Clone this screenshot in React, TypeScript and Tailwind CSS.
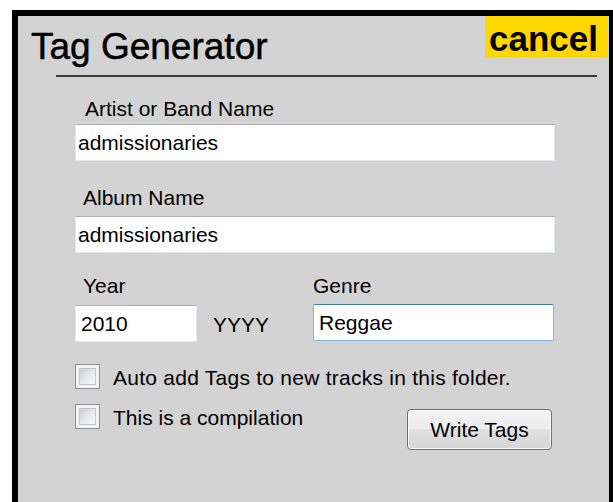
import type { ReactNode } from "react";

function TextField({
  value,
  width = "w-full",
  focused = false,
  inset = "pl-[2px]",
}: {
  value: string;
  width?: string;
  focused?: boolean;
  inset?: string;
}) {
  const edge = focused
    ? "border-[#7eb4ea] border-t-[#3d7bad] rounded-[2px]"
    : "border-[#e3e6ec] border-t-[#abadb3]";
  return (
    <div
      className={`${width} h-[37px] bg-white border flex items-center ${edge} ${inset}`}
    >
      <span className="text-[21px] leading-[24px]">{value}</span>
    </div>
  );
}

function Label({ children, inset }: { children: ReactNode; inset: string }) {
  return (
    <div className={`text-[21px] leading-[24px] ${inset}`}>{children}</div>
  );
}

function CheckBox({ label, tracking = "" }: { label: string; tracking?: string }) {
  return (
    <div className="flex items-start">
      <div className="w-[25px] h-[25px] border border-[#8f8f8f] bg-[#f4f4f4] p-[3px]">
        <div className="w-full h-full border border-[#c2c5ca] bg-[linear-gradient(135deg,#ced1d6_0%,#e9eaec_55%,#f7f7f7_100%)]" />
      </div>
      <span className={`ml-[13px] mt-[2px] text-[21px] leading-[24px] ${tracking}`}>
        {label}
      </span>
    </div>
  );
}

export default function App() {
  return (
    <div className="w-[613px] h-[502px] bg-white pt-[10px] pl-[12px] flex flex-col font-['Liberation_Sans',Arial,sans-serif]">
      <div className="flex-1 border-t-[6px] border-l-[6px] border-r-[4px] border-black bg-[#d3d3d3] text-black">
        {/* header */}
        <div className="flex items-start justify-between">
          <h1 className="mt-[10px] ml-[13px] text-[37px] leading-[41px] font-normal [-webkit-text-stroke:0.5px_black]">
            Tag Generator
          </h1>
          <button className="mr-[1px] w-[123px] h-[41px] bg-[#ffd700] pl-[4px] text-left text-[35px] leading-[45px] font-bold">
            cancel
          </button>
        </div>
        <div className="mt-[8px] ml-[38px] w-[541px] h-[2px] bg-[#3a3a3a]" />

        {/* form */}
        <div className="ml-[57px] w-[480px]">
          <div className="mt-[20px]">
            <Label inset="pl-[10px]">Artist or Band Name</Label>
          </div>
          <div className="mt-[3px]">
            <TextField value="admissionaries" />
          </div>

          <div className="mt-[25px]">
            <Label inset="pl-[8px]">Album Name</Label>
          </div>
          <div className="mt-[6px]">
            <TextField value="admissionaries" />
          </div>

          <div className="mt-[21px] flex">
            <div className="w-[238px]">
              <Label inset="pl-[8px]">Year</Label>
              <div className="mt-[7px] flex items-center">
                <TextField value="2010" width="w-[122px]" inset="pl-[5px]" />
                <span className="ml-[16px] mt-[3px] text-[21px] leading-[24px]">
                  YYYY
                </span>
              </div>
            </div>
            <div className="w-[241px]">
              <Label inset="pl-0">Genre</Label>
              <div className="mt-[6px]">
                <TextField value="Reggae" focused inset="pl-[5px]" />
              </div>
            </div>
          </div>

          <div className="mt-[22px]">
            <CheckBox
              label="Auto add Tags to new tracks in this folder."
              tracking="tracking-[0.25px]"
            />
          </div>
          <div className="mt-[14px] flex items-start justify-between">
            <CheckBox label="This is a compilation" />
            <button className="mt-[5px] mr-[3px] w-[145px] h-[41px] rounded-[4px] border border-[#707070] bg-[linear-gradient(to_bottom,#f4f4f4_0%,#ececec_50%,#e0e0e0_50%,#d6d6d6_100%)] shadow-[inset_0_0_0_1px_#fbfbfb] text-[21px] leading-[24px]">
              Write Tags
            </button>
          </div>
        </div>
      </div>
    </div>
  );
}
